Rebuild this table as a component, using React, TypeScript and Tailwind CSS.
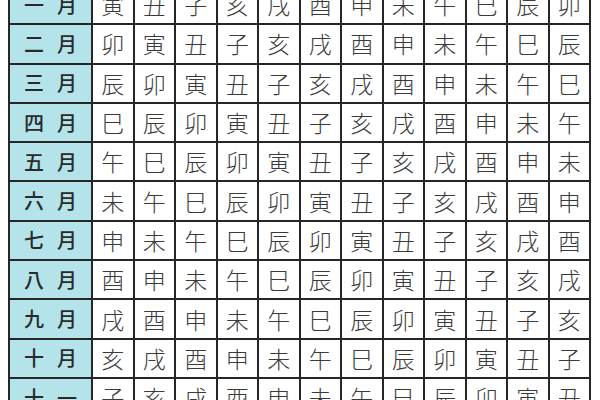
import React from "react";

const B = ["子", "丑", "寅", "卯", "辰", "巳", "午", "未", "申", "酉", "戌", "亥"];
const M: [string, string][] = [
  ["一", "月"],
  ["二", "月"],
  ["三", "月"],
  ["四", "月"],
  ["五", "月"],
  ["六", "月"],
  ["七", "月"],
  ["八", "月"],
  ["九", "月"],
  ["十", "月"],
  ["十", "一"],
];

export default function App() {
  return (
    <div className="w-[600px] h-[400px] overflow-hidden bg-white">
      <div
        className="ml-[8px] -mt-[16px] w-[583px] grid grid-cols-[81px_repeat(12,minmax(0,1fr))] auto-rows-[37.3px] gap-[2px] p-[2px] bg-[#262626]"
        style={{ fontFamily: '"Noto Sans CJK JP", "Noto Sans CJK SC", sans-serif' }}
      >
        {M.map((m, k) => (
          <React.Fragment key={k}>
            <div className="bg-[#b4e3ea] flex items-center justify-center gap-[13px] text-[20px] font-medium text-[#2a2a2a] leading-none">
              <span>{m[0]}</span>
              <span>{m[1]}</span>
            </div>
            {Array.from({ length: 12 }).map((_, j) => (
              <div
                key={j}
                className="bg-white flex items-center justify-center text-[23px] font-light text-[#3a3a3a] leading-none"
              >
                {B[(((2 + k - j) % 12) + 12) % 12]}
              </div>
            ))}
          </React.Fragment>
        ))}
      </div>
    </div>
  );
}
